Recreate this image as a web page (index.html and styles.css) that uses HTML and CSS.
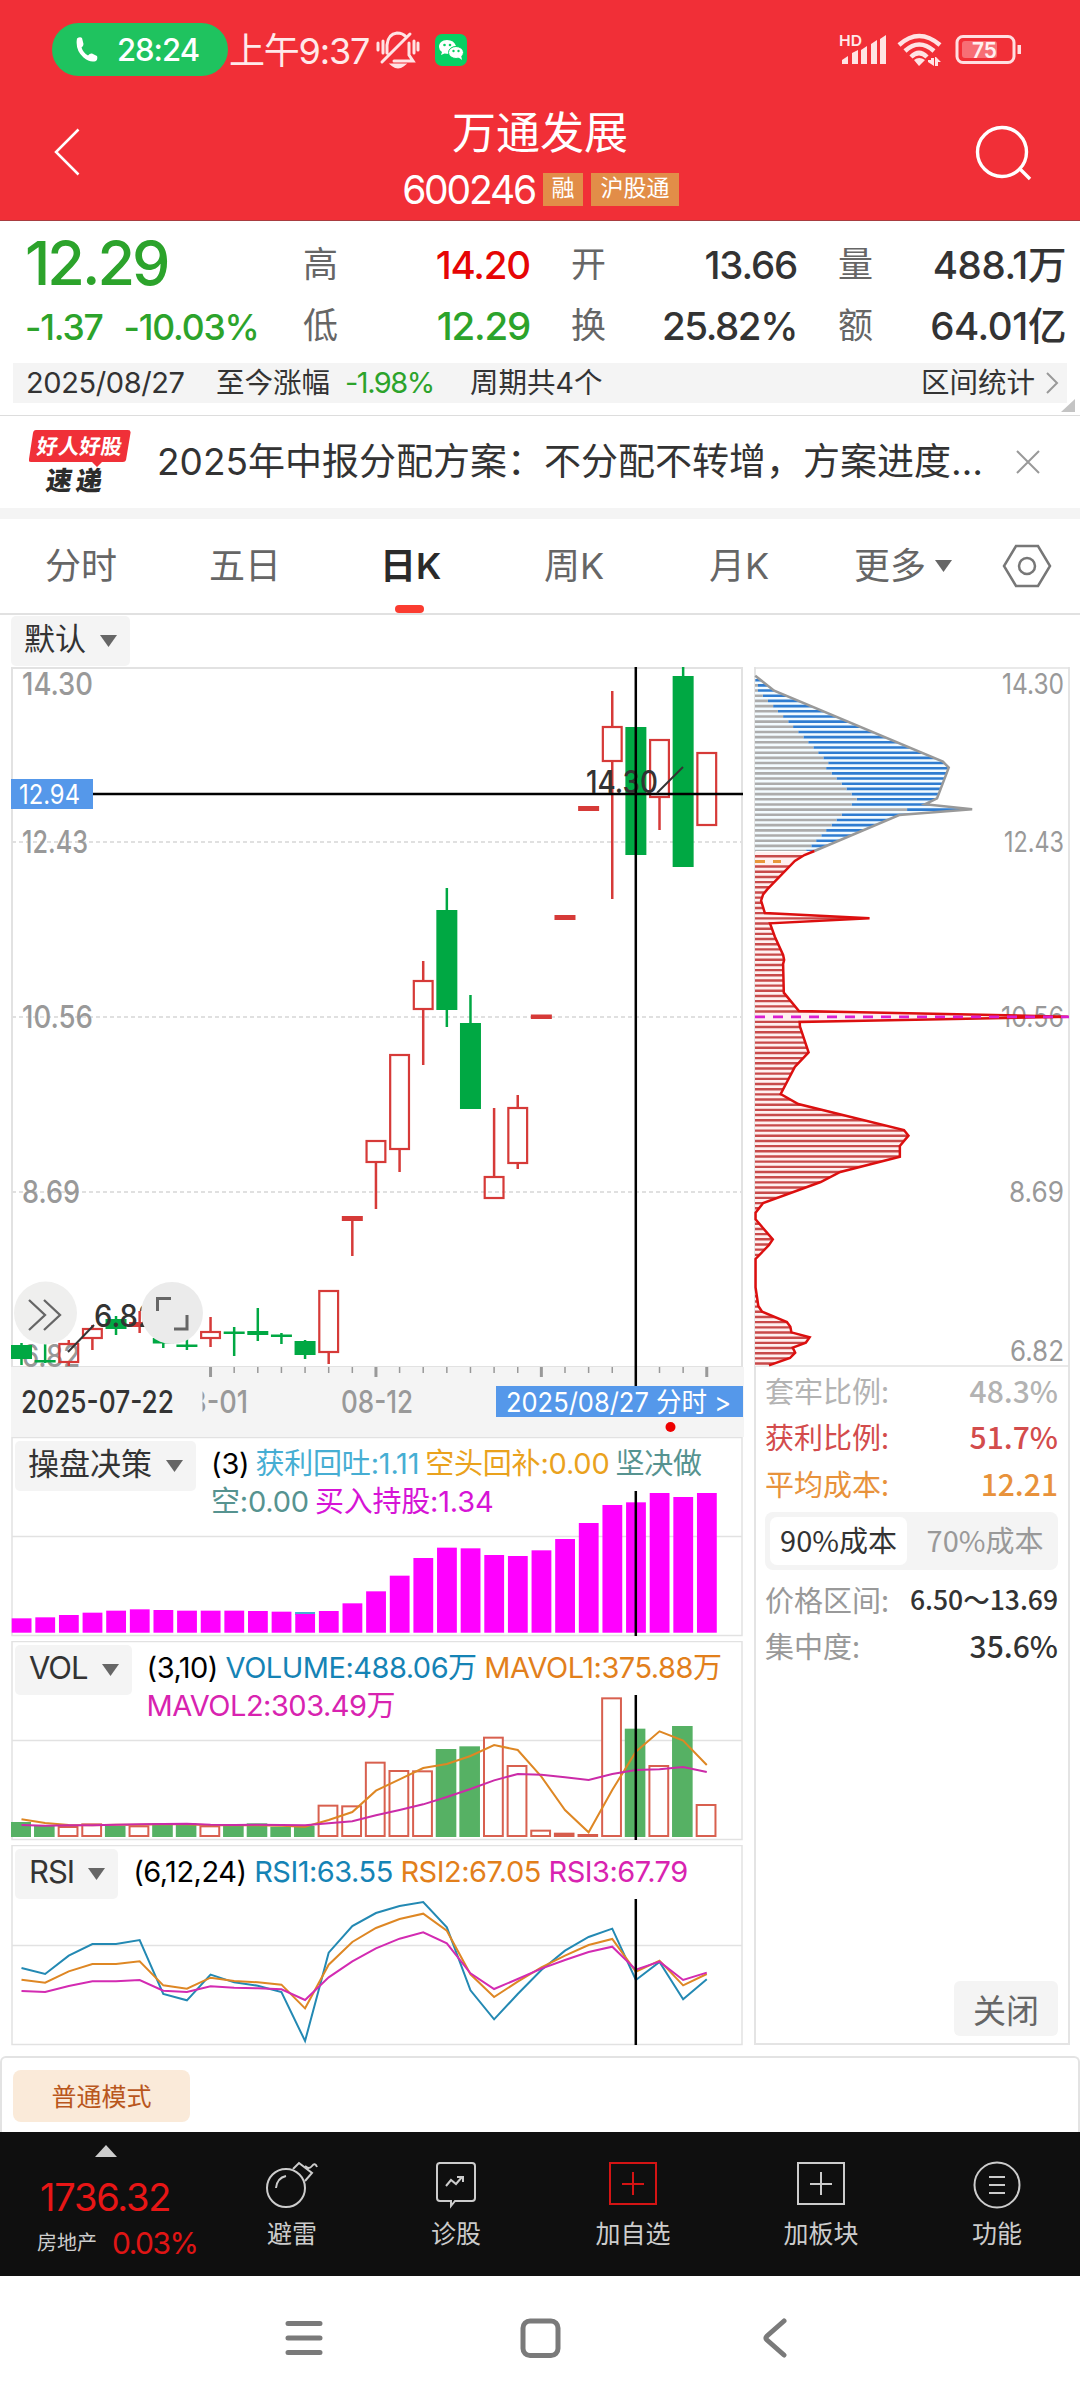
FILE: index.html
```html
<!DOCTYPE html>
<html lang="zh-CN">
<head>
<meta charset="utf-8">
<title>万通发展 600246</title>
<link rel="stylesheet" href="styles.css">
</head>
<body>
<header class="top">
  <div class="status">
    <div class="call">
      <svg width="24" height="26" viewBox="0 0 24 26"><path d="M2 1.500 Q5-.5 7 1L8.500 7Q8.500 9 6.500 10.500Q8 15.500 13 18.500Q15 16 17 16.500L22 19Q23 22 21 24Q15 26 8.500 20.500Q0 13 2 1.500Z" fill="#fff"/></svg>
      <span>28:24</span>
    </div>
    <span class="clock">上午9:37</span>
    <svg class="bell" width="44" height="38" viewBox="0 0 44 38" fill="none" stroke="#ffe3e4" stroke-width="3" stroke-linecap="round"><path d="M11 22V14Q12 3 21 2Q27 2 30 6M33 12V24L37 30H18M34 3L6 31M2 12V19M7 10V22M38 10V22M42 12V19"/><path d="M17 34Q22 38 27 34Z" fill="#ffe3e4"/></svg>
    <svg class="wechat" width="32" height="32" viewBox="0 0 32 32"><rect width="32" height="32" rx="7" fill="#07d063"/><path d="M12 6C7 6 4 9 4 13Q4 16 7 18L6 21L9.500 19.500L14 20Q13 13 21 12Q19 6 12 6Z" fill="#fff"/><ellipse cx="21" cy="18.500" rx="7.500" ry="6" fill="#fff" stroke="#07d063"/><path d="M23 23L27 26L26 21Z" fill="#fff"/><g fill="#07d063"><circle cx="9.500" cy="11" r="1.300"/><circle cx="15" cy="11" r="1.300"/><circle cx="18.500" cy="17" r="1.200"/><circle cx="23.500" cy="17" r="1.200"/></g></svg>
    <svg class="signals" width="184" height="36" viewBox="838 32 184 36">
      <text x="839" y="46" font-size="15" font-weight="600" fill="#ffe9ea" textLength="23" lengthAdjust="spacingAndGlyphs">HD</text>
      <g fill="#ffe3e4"><path d="M842 64V60L848 56V64ZM852 64V53L858 50V64ZM861 64V50L867 46V64ZM871 64V44L877 40V64ZM880 64V39L886 35V64Z"/></g>
      <g fill="none" stroke="#ffe3e4" stroke-width="4.500"><path d="M899 45Q919 27 940 45M905 51Q919 38 934 51M911 57Q919 49 927 57"/></g>
      <path d="M914 60Q919 56 925 60L919 66ZM928 60H931V58H934V66L928 62ZM936 57L941 62H938V66H935V57Z" fill="#ffe3e4"/>
      <rect x="957" y="36.500" width="57" height="26" rx="6" fill="none" stroke="#ffdfe1" stroke-width="3"/>
      <rect x="962" y="41" width="35" height="17" rx="3" fill="#f76e75"/>
      <path d="M1017.500 45h3.500v9h-3.500z" fill="#ffdfe1"/>
      <text x="972" y="57.500" font-size="22" font-weight="600" fill="#fff0f0" textLength="25" lengthAdjust="spacingAndGlyphs">75</text>
    </svg>
  </div>
  <div class="titlebar">
    <svg width="28" height="50" viewBox="0 0 28 50" fill="none" stroke="#fff" stroke-width="2.500"><path d="M25.500 2.500L3 25L25.500 47.500"/></svg>
    <div class="name">
      <h1>万通发展</h1>
      <div class="code"><span>600246</span><i>融</i><i class="wide">沪股通</i></div>
    </div>
    <svg width="60" height="60" viewBox="0 0 60 60" fill="none" stroke="#fff" stroke-width="3.400"><circle cx="28" cy="28" r="24.500"/><path d="M46 45L56 55"/></svg>
  </div>
</header>

<section class="quote">
  <div class="last"><b>12.29</b><span><em>-1.37</em><em class="pct">-10.03%</em></span></div>
  <dl class="stats">
    <dt>高</dt><dd class="red">14.20</dd><dt>开</dt><dd>13.66</dd><dt>量</dt><dd class="unit">488.1万</dd>
    <dt>低</dt><dd class="green">12.29</dd><dt>换</dt><dd class="turn">25.82%</dd><dt>额</dt><dd class="unit">64.01亿</dd>
  </dl>
</section>
<section class="range">
  <span class="date">2025/08/27</span><span class="since">至今涨幅</span><span class="green gain">-1.98%</span><span>周期共4个</span>
  <span class="more">区间统计</span>
  <svg width="14" height="24" viewBox="0 0 14 24" fill="none" stroke="#999" stroke-width="2"><path d="M2 2L12 12L2 22"/></svg>
  <svg class="corner" width="14" height="13"><path d="M14 0V13H0Z" fill="#c4c4c4"/></svg>
</section>

<section class="news">
  <svg class="badge" width="104" height="66" viewBox="29 430 104 66">
    <path d="M36 431H128Q131 431 130.500 434L126 461Q125.500 463 123 463H102L97 468L92 463H31Q28 463 29 460L33 434Q33.500 431 36 431Z" fill="#f03038"/>
    <g transform="skewX(-8)" font-family="'Noto Sans CJK SC'"><text x="100" y="455" font-size="21" font-weight="700" fill="#fff" textLength="85">好人好股</text><text x="114" y="491" font-size="26" font-weight="900" fill="#2c2c2c" textLength="56">速递</text></g>
  </svg>
  <p>2025年中报分配方案：不分配不转增，方案进度…</p>
  <svg width="24" height="24" viewBox="0 0 24 24" stroke="#999" stroke-width="2"><path d="M1 1L23 23M23 1L1 23"/></svg>
</section>

<nav class="tabs">
  <a>分时</a><a>五日</a><a class="on">日K</a><a>周K</a><a>月K</a><a class="drop">更多<svg width="17" height="12"><path d="M0 0H17L8.500 12Z" fill="#666"/></svg></a>
  <svg width="50" height="44" viewBox="0 0 50 44" fill="none" stroke="#777" stroke-width="2.500"><path d="M14 2H36L48 22L36 42H14L2 22Z"/><circle cx="25" cy="22" r="8"/></svg>
</nav>

<main>
  <div class="preset"><button class="pick">默认<svg width="17" height="12"><path d="M0 0H17L8.500 12Z" fill="#666"/></svg></button></div>
  <div class="charts">
    <div class="left">
      <div class="panel k">
        <svg id="kline" viewBox="11 667 733 770"></svg>
      </div>
      <div class="panel sub1">
        <svg id="decision" viewBox="11 1437 733 204"></svg>
        <button class="pick">操盘决策<svg width="17" height="12"><path d="M0 0H17L8.500 12Z" fill="#666"/></svg></button>
        <p class="legend l1"><span>(3) </span><span class="cyan">获利回吐:1.11 </span><span class="gold">空头回补:0.00 </span><span class="teal">坚决做<br>空:0.00 </span><span class="mag">买入持股:1.34</span></p>
      </div>
      <div class="panel sub2">
        <svg id="vol" viewBox="11 1641 733 204"></svg>
        <button class="pick latin">VOL<svg width="17" height="12"><path d="M0 0H17L8.500 12Z" fill="#666"/></svg></button>
        <p class="legend l2"><span>(3,10) </span><span class="blue">VOLUME:488.06万 </span><span class="orange">MAVOL1:375.88万</span><br><span class="pink">MAVOL2:303.49万</span></p>
      </div>
      <div class="panel sub3">
        <svg id="rsi" viewBox="11 1845 733 201"></svg>
        <button class="pick latin">RSI<svg width="17" height="12"><path d="M0 0H17L8.500 12Z" fill="#666"/></svg></button>
        <p class="legend l3"><span>(6,12,24) </span><span class="blue">RSI1:63.55 </span><span class="orange">RSI2:67.05 </span><span class="pink">RSI3:67.79</span></p>
      </div>
    </div>
    <aside class="chips">
      <svg id="dist" viewBox="754 667 316 700" width="316" height="700"></svg>
      <div class="row g"><span>套牢比例:</span><b>48.3%</b></div>
      <div class="row r"><span>获利比例:</span><b>51.7%</b></div>
      <div class="row o"><span>平均成本:</span><b>12.21</b></div>
      <div class="toggle"><span class="sel">90%成本</span><span class="alt">70%成本</span></div>
      <div class="row k1"><span>价格区间:</span><b class="rng">6.50～13.69</b></div>
      <div class="row k1"><span>集中度:</span><b>35.6%</b></div>
      <button class="close">关闭</button>
    </aside>
  </div>
</main>

<section class="mode"><button>普通模式</button></section>

<footer class="bar">
  <div class="index"><svg width="22" height="12"><path d="M11 0L22 12H0Z" fill="#ccc"/></svg><b>1736.32</b><span>房地产 <em>0.03%</em></span></div>
  <a class="a1"><svg viewBox="0 0 54 48" width="54" height="48"><circle cx="21" cy="27" r="19"/><path d="M11 27Q12 17 21 15M28 8L34 2L47 12L40 20M40 5Q44 9 47 5T52 6"/></svg>避雷</a>
  <a class="a2"><svg viewBox="0 0 54 48" width="54" height="48"><path d="M10 2H43Q46 2 46 5V37Q46 40 43 40H26L22 45V40H11Q8 40 8 37V5Q8 2 11 2M17 25L22 19L27 23L33 16M28 16H34V21"/></svg>诊股</a>
  <a class="a3"><svg viewBox="0 0 54 48" width="54" height="48"><path d="M4 2H50V43H4ZM16 23H38M27 11V34"/></svg>加自选</a>
  <a class="a4"><svg viewBox="0 0 54 48" width="54" height="48"><path d="M4 2H50V43H4ZM16 23H38M27 11V34"/></svg>加板块</a>
  <a class="a5"><svg viewBox="0 0 54 48" width="54" height="48"><circle cx="27" cy="24" r="22.500"/><path d="M19 16H35M19 24H35M19 32H35"/></svg>功能</a>
</footer>
<div class="sys">
  <svg width="510" height="44" viewBox="281 2316 510 44" fill="none" stroke="#7a7a7a" stroke-width="5" stroke-linecap="round"><path d="M288 2323.500H320M288 2338H320M288 2352.500H320"/><rect x="523" y="2321" width="35" height="34.500" rx="7"/><path d="M784 2321L767 2336Q765 2338 767 2340L784 2355"/></svg>
</div>
<script src="charts.js"></script>
</body>
</html>
```
FILE: styles.css
```css
* { box-sizing: border-box; }
body { margin: 0; width: 1080px; height: 2400px; background: #fff; color: #333; font-family: Inter, "Noto Sans CJK SC", sans-serif; overflow: hidden; }
svg { display: block; flex: none; }
svg text { font-family: Inter, "Noto Sans CJK SC", sans-serif; }
button { border: 0; font: inherit; color: inherit; margin: 0; padding: 0; }
p, h1, dl, dd { margin: 0; }
i, em { font-style: normal; }
.red { color: #e60505; }
.green { color: #2ca32b; }

.top { height: 221px; background: #f12f37; color: #fff; border-bottom: 1px solid #a83c40; }
.status { display: flex; align-items: center; height: 76px; padding: 23px 58px 0 52px; }
.call { display: flex; align-items: center; width: 176px; height: 53px; border-radius: 27px; background: #1fc35f; padding-left: 23px; gap: 18px; font-size: 31px; font-weight: 500; letter-spacing: -1px; }
.clock { font-size: 36px; margin-left: 1px; padding-bottom: 4px; color: #ffe9ea; width: 147px; white-space: nowrap; letter-spacing: -1.200px; }
.bell { margin-right: 15px; }
.signals { margin-left: auto; }
.titlebar { display: flex; padding: 0 46px 0 53px; justify-content: space-between; height: 144px; }
.titlebar > svg:first-child { margin-top: 51px; }
.titlebar > svg:last-child { margin-top: 48px; }
.name { text-align: center; padding-top: 30px; margin-left: 25px; width: 300px; }
h1 { font-size: 44px; font-weight: 400; line-height: 54px; }
.code { display: flex; align-items: center; justify-content: center; height: 58px; gap: 8px; font-size: 39px; margin-right: -1px; }
.code span { letter-spacing: -2.200px; }
.code i { width: 40px; height: 33px; background: #e28d48; font-size: 23px; line-height: 30px; }
.code i.wide { width: 88px; }

.quote { display: flex; height: 142px; padding: 14px 14px 0 25px; }
.last { width: 278px; color: #2ca32b; }
.last b { display: block; font-size: 61px; font-weight: 500; line-height: 56px; margin-bottom: 17px; letter-spacing: -3px; }
.last span { display: flex; gap: 21px; font-size: 35.500px; line-height: 40px; font-weight: 500; letter-spacing: -1.200px; }
.stats { display: grid; grid-template-columns: 34px 193px 75px 192px 75px 194px; grid-template-rows: 61px 61px; line-height: 60px; width: 763px; }
.stats dt { font-size: 35px; color: #666; line-height: 58px; }
.stats dt:nth-of-type(3n+2), .stats dt:nth-of-type(3n) { padding-left: 41px; }
.stats dd { font-size: 38.500px; font-weight: 500; text-align: right; letter-spacing: -1.200px; white-space: nowrap; }
.stats dd.unit { letter-spacing: -.4px; }
.stats dd.turn { letter-spacing: -1.400px; }
.range { position: relative; display: flex; align-items: center; height: 40px; margin: 0 13px; padding: 0 8px 0 13px; background: #f4f4f4; font-size: 28.500px; line-height: 38px; white-space: nowrap; }
.range .date { width: 190px; font-size: 29px; letter-spacing: -.4px; }
.range .since { width: 129px; }
.range .gain { width: 125px; font-size: 29px; letter-spacing: -1.500px; }
.range .more { margin-left: auto; margin-right: 10px; }
.corner { position: absolute; right: -8px; bottom: -9px; }

.news { display: flex; align-items: center; height: 93px; margin-top: 12px; border-top: 1px solid #ddd; padding: 0 40px 0 29px; }
.news p { font-size: 37px; margin-left: 24px; flex: 1; white-space: nowrap; line-height: 50px; }
.tabs { display: flex; align-items: center; position: relative; height: 107px; border-top: 11px solid #f4f4f4; border-bottom: 2px solid #e1e1e1; font-size: 36px; color: #666; padding-left: 45px; }
.tabs a { width: 164px; position: relative; line-height: 94px; white-space: nowrap; }
.tabs a:nth-child(2) { width: 171px; }
.tabs a:nth-child(3) { width: 164px; }
.tabs a:nth-child(4) { width: 165px; }
.tabs a:nth-child(5) { width: 145px; }
.tabs .drop { width: 148px; display: flex; align-items: center; gap: 9px; }
.tabs .on { color: #2a2a2a; font-weight: 600; }
.tabs .on::after { content: ""; position: absolute; left: 15px; bottom: 0; width: 29px; height: 8px; border-radius: 4px; background: #fb3c30; }

.preset { height: 52px; padding: 1px 0 0 11px; }
.pick { display: inline-flex; align-items: center; gap: 14px; height: 50px; padding: 0 13px 4px 13px; background: #f4f4f4; border-radius: 5px; font-size: 31px; color: #333; line-height: 44px; }
.pick.latin { letter-spacing: -1px; padding-left: 14px; }
.pick svg { position: relative; top: 2px; }
.charts { display: flex; gap: 10px; padding-left: 11px; height: 1379px; }
.left { width: 733px; }
.panel { position: relative; display: flex; align-items: flex-start; }
.panel > svg { position: absolute; inset: 0; width: 100%; height: 100%; }
.panel .pick, .legend { position: relative; }
.panel .pick { margin: 4px 0 0 4px; }
.k { height: 770px; }
.sub1, .sub2 { height: 204px; }
.sub3 { height: 201px; }
.legend { font-size: 29px; line-height: 38px; margin: 8px 0 0 15px; white-space: nowrap; color: #000; }
.l1 { letter-spacing: -.2px; word-spacing: -2px; }
.l2 { letter-spacing: -.5px; }
.l3 { letter-spacing: -.5px; }
.cyan { color: #46aed3; } .gold { color: #eaa21d; } .teal { color: #569390; } .mag { color: #d614d6; }
.blue { color: #1583b5; } .orange { color: #e27f1b; } .pink { color: #d823b0; }

.chips { position: relative; width: 316px; border: 2px solid #e4e4e4; border-top: 0; height: 1378px; display: flex; flex-direction: column; font-family: "Noto Sans CJK SC", sans-serif; padding: 0 10px; }
.chips > svg { margin: 0 -12px; }
.row { display: flex; justify-content: space-between; align-items: center; height: 46.300px; font-size: 29px; line-height: 46px; color: #999; margin-left: -1px; }
.row b { font-size: 30px; font-weight: 500; }
.row b.rng { font-size: 26.500px; }
.g, .g b { color: #b3b3b3; } .r { color: #d34c4c; } .o { color: #e8923b; }
.k1 b { color: #333; }
.toggle { display: flex; height: 58px; margin: 6px 0 6px -1px; width: 293px; padding: 5px; background: #f4f4f4; border-radius: 8px; font-size: 29px; line-height: 44px; color: #999; text-align: center; }
.toggle span { flex: 1; border-radius: 7px; white-space: nowrap; }
.toggle .sel { background: #fff; color: #333; flex: 0 0 137px; }
.toggle .alt { padding-left: 10px; }
.close { margin: auto 0 7px auto; width: 104px; height: 55px; background: #f4f4f4; border-radius: 6px; color: #666; font-size: 33px; }

.mode { margin-top: 10px; height: 76px; border: 2px solid #e3e3e3; border-bottom: 0; border-radius: 6px 6px 0 0; padding: 12px 11px; }
.mode button { width: 177px; height: 52px; border-radius: 8px; background: #faead9; color: #b9571d; font-size: 25px; padding-bottom: 3px; }

.bar { display: flex; height: 144px; background: #0f0f0f; color: #ccc; }
.index { width: 236px; padding: 13px 0 0 37px; }
.index svg { margin-left: 58px; }
.index b { display: block; color: #e81616; font-size: 38px; font-weight: 400; letter-spacing: -1.200px; line-height: 50px; margin: 15px 0 0 3px; }
.index span { display: flex; font-size: 20px; align-items: center; line-height: 42px; }
.index em { color: #e01515; font-size: 30px; margin-left: 15px; letter-spacing: -1.500px; }
.bar a { width: 112px; display: flex; flex-direction: column; align-items: center; font-size: 25px; line-height: 34px; padding-top: 29px; gap: 8px; }
.bar a svg { fill: none; stroke: #ccc; stroke-width: 2; }
.bar .a2 { margin-left: 52px; } .bar .a3 { margin-left: 65px; } .bar .a4 { margin-left: 76px; } .bar .a5 { margin-left: 64px; }
.bar .a3 svg { stroke: #d41414; }
.sys { height: 124px; padding: 40px 0 0 281px; }
```
FILE: charts.js
```js
const X = i => 21.5 + i * 23.63;
const line = (x1, y1, x2, y2, c, w, extra = '') => `<line x1="${x1}" y1="${y1}" x2="${x2}" y2="${y2}" stroke="${c}" stroke-width="${w}" ${extra}/>`;
const rect = (x, y, w, h, f, s = 'none', sw = 0, extra = '') => `<rect x="${x}" y="${y}" width="${w}" height="${h}" fill="${f}" stroke="${s}" stroke-width="${sw}" ${extra}/>`;
const text = (t, x, y, size, c, len, weight = 400, extra = '') => `<text x="${x}" y="${y}" font-size="${size}" fill="${c}" font-weight="${weight}" textLength="${len}" lengthAdjust="spacingAndGlyphs" ${extra}>${t}</text>`;
const poly = (ys, c) => `<polyline fill="none" stroke="${c}" stroke-width="2" points="${ys.map((y, i) => X(i) + ',' + y).join(' ')}"/>`;
const put = (id, s) => { document.getElementById(id).innerHTML = s; };
const GRID = '#e2e2e2', UP = '#d63a38', DOWN = '#00a843';

// [direction, body top, body bottom, high, low]
const candles = [
  ['g',1345,1359,1343,1365],['g',1360,1362.5,1343,1363],['r',1343,1363,1340,1366],['r',1328,1339,1325,1350],
  ['g',1319,1329,1316,1335],['s',1322,1327,1311,1333],['g',1338,1343.5,1334,1348],['g',1344.5,1347,1339,1350],
  ['r',1331,1339,1317,1347],['g',1331.5,1334,1327,1356],['g',1331,1335,1308,1341],['g',1334.5,1337,1333,1344],
  ['g',1341,1355,1340,1359],['r',1290,1353,1290,1364],['s',1216,1221,1216,1256],['r',1140,1163,1140,1209],
  ['r',1054,1150,1054,1172],['r',980,1010,961,1065],['g',910,1010,888,1027],['g',1023,1109,995,1109],
  ['r',1176,1199,1108,1199],['r',1107,1164,1095,1169],['s',1014.5,1019,1014.5,1019],['s',915,920,915,920],
  ['s',806,811,806,811],['r',726,762,691,899],['g',727,855,727,855],['r',739,798,739,830],
  ['g',676,867,667,867],['r',752,826,752,826]];

let s = rect(12, 668, 730, 699, 'none', GRID, 2);
for (const y of [842, 1017, 1192]) s += line(12, y, 742, y, '#e0e0e0', 2, 'stroke-dasharray="4 3"');
[['14.30',695,71],['12.43',853,66],['10.56',1028,71],['8.69',1203,58],['6.82',1367,58]].forEach(([t, y, w]) => s += text(t, 22, y, 31, '#999', w, 500));
candles.forEach(([k, a, b, h, l], i) => {
  const x = X(i);
  if (k === 'g') s += line(x, h, x, l, DOWN, 2.5) + rect(x - 10.5, a, 21, b - a, DOWN);
  else {
    s += line(x, h, x, a, UP, 2.5) + line(x, b, x, l, UP, 2.5);
    s += k === 's' ? rect(x - 10.5, a, 21, b - a, UP) : rect(x - 9.4, a + 1, 18.8, b - a - 2, 'none', UP, 2.2);
  }
});
s += line(68, 1352, 94, 1325, '#333', 2) + text('6.82', 94, 1327, 31, '#333', 62, 500);
s += line(11, 794, 743, 794, '#000', 2.5) + rect(11, 779, 82, 30, '#5598ea') + text('12.94', 19, 804, 27, '#fff', 61);
s += text('14.30', 586, 793, 31, '#333', 72, 500) + line(657, 793, 683, 767, '#333', 2);
s += rect(11, 1367, 733, 70, '#f4f4f4') + line(635.8, 667, 635.8, 1387, '#000', 2.5);
for (let i = 8; i < 30; i++) if (i !== 26) s += line(X(i), 1367, X(i), (i - 8) % 7 ? 1373 : 1377, '#999', (i - 8) % 7 ? 1.5 : 3);
s += text('08-01', 172, 1413, 31, '#999', 76, 500) + rect(11, 1384, 191.500, 40, '#f4f4f4');
s += text('2025-07-22', 21, 1413, 31, '#333', 153, 500) + text('08-12', 341, 1413, 31, '#999', 72, 500);
s += rect(496, 1386, 247, 31, '#5598ea') + text('2025/08/27 分时 &gt;', 506, 1412, 27, '#fff', 225) + '<circle cx="670.5" cy="1427" r="5" fill="#e00"/>';
s += '<circle cx="45.5" cy="1313" r="31.5" fill="#efefee"/><circle cx="172" cy="1313" r="31" fill="#ebebeb"/>';
s += '<g fill="none" stroke="#666" stroke-width="2.3"><path d="M29 1300L45 1315L29 1330M44 1300L60 1315L44 1330"/><path d="M157.500 1311V1298.500H171M187 1315V1329H174" stroke-width="3"/></g>';
put('kline', s);

const frame = (top, bottom, mid) => rect(12, top, 730, bottom - top, 'none', GRID, 1.5) + line(12, mid, 742, mid, GRID, 1.5);
const cross = (a, b) => line(635.8, a, 635.8, b, '#000', 2.5);

const buy = [565,562,555,548,542,538,540,542,542,542,543,545,552,543,520,484,437,384,353,355,375,378,361,327,279,225,217,189,201,189];
s = frame(1437.5, 1635.5, 1536.5) + rect(X(12) - 10, 1612, 20, 3, '#46aed3');
buy.forEach((v, i) => { const y = 1430 + v / 3; s += rect(X(i) - 9.8, y, 19.8, 1632.7 - y, '#f0f'); });
put('decision', s + cross(1491, 1636));

const vols = 'g1176 g1188 r1188 r1180 g1188 r1186 g1180 g1180 r1186 g1188 g1180 g1190 g1188 r1124 r1126 r995 r1020 r1021 g957 g949 r920 r1005 r1199 r1208 r1212 r802 g896 r1005 g888 r1122'.split(' ');
const ma1 = [1168,1179,1185,1186,1184,1184,1182,1183,1186,1186,1186,1187,1190,1170,1146,1082,1048,1014,1002,978,945,960,1040,1140,1207,1080,965,904,932,1005];
const ma2 = [1185,1187,1186,1186,1184,1183,1182,1181,1184,1185,1184,1185,1186,1180,1174,1156,1140,1123,1101,1077,1051,1032,1034,1042,1050,1032,1020,1018,1011,1026];
s = frame(1641.5, 1839.5, 1740.5);
vols.forEach((v, i) => {
  const y = 1430 + v.slice(1) / 3, x = X(i) - .8;
  s += v[0] === 'g' ? rect(x - 10.3, y, 20.6, 1837 - y, '#56b164')
    : 1837 - y < 5 ? rect(x - 10.3, y, 20.6, 1837 - y, '#d65c4c') : rect(x - 9.3, y + 1, 18.8, 1835 - y, '#fff', '#d8604f', 2);
});
put('vol', s + poly(ma1.map(v => 1430 + v / 3), '#de8724') + poly(ma2.map(v => 1430 + v / 3), '#cb2ba8') + cross(1695, 1840));

const rsi = [
  [[414,432,377,342,342,330,492,511,434,457,467,486,633,368,288,249,228,216,292,481,568,492,420,362,321,296,450,396,508,448], '#2389b3'],
  [[449,458,424,402,402,394,466,476,443,453,457,464,535,404,336,294,267,251,302,433,501,455,412,377,345,327,425,392,466,432], '#de8724'],
  [[483,486,468,454,454,450,482,486,469,473,475,478,510,442,394,355,326,307,340,430,477,447,416,390,366,350,419,395,450,428], '#d32bb2']];
s = frame(1845.5, 2044.5, 1945.5);
rsi.forEach(([v, c]) => s += poly(v.map(y => 1830 + y / 3), c));
put('rsi', s + cross(1899, 2045));

// chip distribution, outline points [cost width, price level]
const up = [[625,47],[680,92],[1170,305],[1187,323],[1153,415],[1118,433],[1255,448],[1043,465],[797,573]].map(([x, y]) => [540 + x / 2.904, 660 + y / 3]);
const lowA = [[797,573],[768,585],[740,603],[660,688],[648,703],[642,722],[653,759],[957,775],[668,790],[682,830],[706,885],[709,900],[706,912],[708,998],[752,1053],[1533,1070],[754,1086],[755,1100],[780,1177]].map(([x, y]) => [540 + x / 2.904, 660 + y / 3]);
const lowB = [[740,51],[699,132],[750,162],[1057,240],[1070,257],[1045,288],[1045,320],[872,366],[815,396],[648,459],[626,488],[626,508],[676,568],[665,585],[626,627],[626,712],[634,768],[645,785],[717,816],[727,830],[730,847],[783,862],[772,878],[734,893],[741,908],[726,924],[665,946]].map(([x, y]) => [540 + x / 2.904, 1050 + y / 3]);
const low = lowA.concat(lowB), pts = a => a.map(p => p.join()).join(' ');
const inner = [625,633,633,647,662,677,691,706,721,735,750,765,779,794,808,823,837,831,847,861,876,890,905,920,905,1066,876,861,847,831,817,802,788,773];
s = `<defs><clipPath id="cu"><polygon points="755,675 ${pts(up)} 755,851"/></clipPath><clipPath id="cl"><polygon points="755,851 ${pts(low)} 755,1366"/></clipPath></defs>`;
s += line(754, 668, 1069, 668, GRID, 1.5) + line(754, 1366, 1069, 1366, GRID, 1.5);
[['14.30',693.5,62],['12.43',852,60],['10.56',1027,63],['8.69',1202,55],['6.82',1361,54]].forEach(([t, y, w]) => s += text(t, 1064 - w, y, 28, '#999', w));
let u = '', d = '';
for (let k = 0; k < 133; k++) {
  const y = 680.2 + k * 5.177;
  if (k < inner.length) { const m = 540 + inner[k] / 2.904; u += line(m, y, 1069, y, '#2f7cd0', 2.6) + line(755, y, m, y, '#acacac', 2.6); }
  else if (k === 35) d += line(755, y, 781, y, '#e8973b', 3, 'stroke-dasharray="10 8"');
  else if (k !== 65) d += line(755, y, 1069, y, '#c84a4a', 2.4);
}
s += `<g clip-path="url(#cu)"><rect x="755" y="667" width="314" height="190" fill="#f3fbff"/>${u}</g><g clip-path="url(#cl)"><rect x="755" y="852" width="314" height="515" fill="#fff0f0"/>${d}</g>`;
s += `<polyline points="${pts(up)}" fill="none" stroke="#999" stroke-width="2.5"/><polyline points="${pts(low)}" fill="none" stroke="#dc0f0f" stroke-width="2.5"/>`;
s += line(755, 1016.8, 1069, 1016.8, '#d91fd0', 2.7, 'stroke-dasharray="10 8"');
put('dist', s);
```
